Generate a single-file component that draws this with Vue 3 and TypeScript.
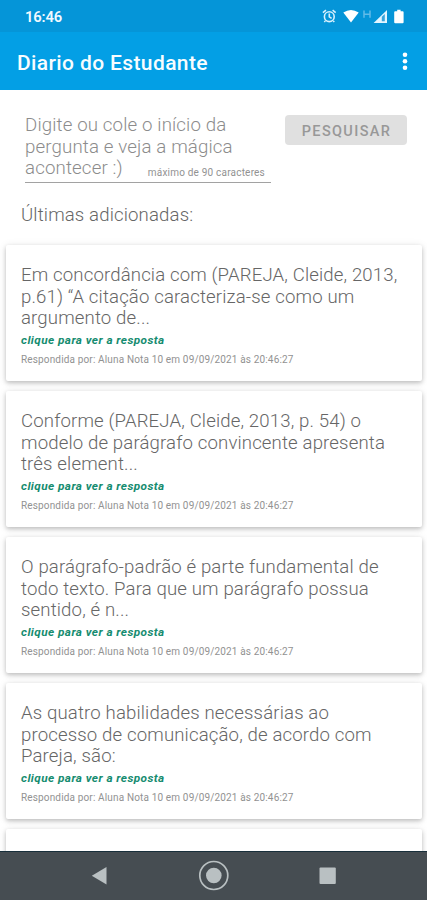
<script setup lang="ts">
interface Question {
  id: number
  lines: string[]
}

const questions: Question[] = [
  { id: 1, lines: ['Em concordância com (PAREJA, Cleide, 2013,', 'p.61) “A citação caracteriza-se como um', 'argumento de...'] },
  { id: 2, lines: ['Conforme (PAREJA, Cleide, 2013, p. 54) o', 'modelo de parágrafo convincente apresenta', 'três element...'] },
  { id: 3, lines: ['O parágrafo-padrão é parte fundamental de', 'todo texto. Para que um parágrafo possua', 'sentido, é n...'] },
  { id: 4, lines: ['As quatro habilidades necessárias ao', 'processo de comunicação, de acordo com', 'Pareja, são:'] },
]
const hint: string[] = ['Digite ou cole o início da', 'pergunta e veja a mágica', 'acontecer :)']
</script>

<template>
  <div class="screen">
    <header class="status">
      <span class="clock">16:46</span>
      <svg class="status-icons" width="86" height="20" viewBox="0 0 86 20">
        <g fill="none" stroke="#d8f0fd" stroke-width="1.6">
          <circle cx="10.3" cy="10.7" r="4.9" />
          <path d="M3.900 6.600 7 4.200M16.700 6.600 13.600 4.200M10.300 7.600v3.300l2.300 1.500M6.300 15l-1 1M14.300 15l1 1" />
        </g>
        <path d="M24.300 6.600Q32 1.400 39.700 6.600L32 16.600Z" fill="#fff" />
        <path d="M45 4.600v7.200M51 4.600v7.200M45 8.200h6" fill="none" stroke="#62bbe8" stroke-width="1.500" />
        <path d="M54.600 17 68 4v13Z" fill="#e4f5ff" />
        <path d="M62.800 10.800 65.800 7.900v7.300h-3Z" fill="#3aa5dc" />
        <path d="M78.200 3.800h3.400v1.400h2q1 0 1 1v10q0 1-1 1h-7.400q-1 0-1-1V6.200q0-1 1-1h2Z" fill="#fff" />
      </svg>
    </header>
    <div class="appbar">
      <h1>Diario do Estudante</h1>
      <svg class="more" width="6" height="20" viewBox="0 0 6 20" fill="#fff">
        <circle cx="3" cy="3.800" r="2.300" />
        <circle cx="3" cy="10.300" r="2.300" />
        <circle cx="3" cy="16.800" r="2.300" />
      </svg>
    </div>
    <main class="content">
      <section class="search">
        <div class="field">
          <div class="hint">
            <div v-for="line in hint" :key="line">{{ line }}</div>
          </div>
          <span class="limit">máximo de 90 caracteres</span>
        </div>
        <button class="submit" type="button">PESQUISAR</button>
      </section>
      <h2>Últimas adicionadas:</h2>
      <div class="list">
        <article v-for="q in questions" :key="q.id" class="card">
          <div class="question">
            <div v-for="line in q.lines" :key="line">{{ line }}</div>
          </div>
          <div class="link">clique para ver a resposta</div>
          <div class="meta">Respondida por: Aluna Nota 10 em 09/09/2021 às 20:46:27</div>
        </article>
        <article class="card"></article>
      </div>
    </main>
    <nav class="navbar">
      <svg width="427" height="49" viewBox="0 0 427 49">
        <path d="M91.800 24.700 106.500 16v17.500Z" fill="#b9c0c2" />
        <circle cx="213.800" cy="24.500" r="14" fill="none" stroke="#b9c0c2" stroke-width="1.700" />
        <circle cx="213.800" cy="24.500" r="7.800" fill="#b9c0c2" />
        <rect x="319.500" y="16.500" width="16.300" height="16.500" rx="1" fill="#b9c0c2" />
      </svg>
    </nav>
  </div>
</template>

<style>
body {
  margin: 0;
  overflow: hidden;
}
</style>

<style scoped>
.screen {
  width: 427px;
  height: 900px;
  display: flex;
  flex-direction: column;
  overflow: hidden;
  background: #fff;
  font-family: Roboto, "Liberation Sans", sans-serif;
  white-space: nowrap;
}
.status {
  flex: none;
  height: 32px;
  box-sizing: border-box;
  padding: 0 22px 0 25px;
  display: flex;
  align-items: center;
  justify-content: space-between;
  background: #0595d8;
}
.clock {
  margin-top: 2px;
  font-size: 14.8px;
  font-weight: 600;
  letter-spacing: -0.15px;
  color: #f2faff;
}
.appbar {
  flex: none;
  height: 58px;
  box-sizing: border-box;
  padding: 0 19px 0 17px;
  display: flex;
  align-items: center;
  justify-content: space-between;
  background: #039fe5;
}
h1 {
  margin: 3px 0 0;
  font-size: 21px;
  line-height: 28px;
  font-weight: 500;
  letter-spacing: 0.38px;
  color: #f8fdff;
}
.content {
  flex: 1;
  min-height: 0;
  overflow: hidden;
}
.search {
  height: 93px;
  box-sizing: border-box;
  padding: 24px 20px 0 25px;
  display: flex;
  justify-content: space-between;
  align-items: flex-start;
}
.field {
  width: 246px;
  height: 69px;
  box-sizing: border-box;
  border-bottom: 1.5px solid #a2a2a2;
  display: flex;
  align-items: flex-start;
  justify-content: space-between;
}
.hint {
  width: 100px;
  padding-top: 1px;
  font-size: 18.7px;
  line-height: 21.6px;
  font-weight: 340;
  letter-spacing: 0.13px;
  color: #8c8c8c;
}
.limit {
  margin: 52px 6px 0 0;
  font-size: 10px;
  line-height: 13px;
  letter-spacing: 0.2px;
  color: #929292;
}
.submit {
  width: 122px;
  height: 30px;
  margin-top: 0.5px;
  padding: 3px 0 0 1px;
  border: 0;
  border-radius: 4px;
  background: #e0e0e0;
  color: #989898;
  font-family: inherit;
  font-size: 14.5px;
  font-weight: 500;
  letter-spacing: 1.35px;
}
h2 {
  margin: 20px 0 0 21px;
  font-size: 18.6px;
  line-height: 24px;
  font-weight: 340;
  letter-spacing: 0.14px;
  color: #666;
}
.list {
  margin-top: 18px;
  padding: 0 5px 0 6px;
  display: flex;
  flex-direction: column;
  gap: 10px;
}
.card {
  height: 136px;
  box-sizing: border-box;
  padding: 20px 15px 0;
  border-radius: 2px;
  background: #fff;
  box-shadow: 0 2px 4px rgba(0, 0, 0, 0.2), 0 1px 8px rgba(0, 0, 0, 0.1);
}
.question {
  font-size: 18.6px;
  line-height: 21.6px;
  font-weight: 340;
  letter-spacing: 0.14px;
  color: #666;
}
.link {
  margin-top: 2px;
  font-size: 11.8px;
  line-height: 16px;
  font-weight: 700;
  font-style: italic;
  letter-spacing: 0.43px;
  color: #168c70;
}
.meta {
  margin-top: 5px;
  font-size: 10px;
  line-height: 14px;
  letter-spacing: 0.15px;
  color: #929292;
}
.navbar {
  position: relative;
  flex: none;
  height: 49px;
  box-sizing: border-box;
  background: #464d52;
  box-shadow: inset 0 1px #182f3b;
}
.navbar svg {
  display: block;
}
</style>
